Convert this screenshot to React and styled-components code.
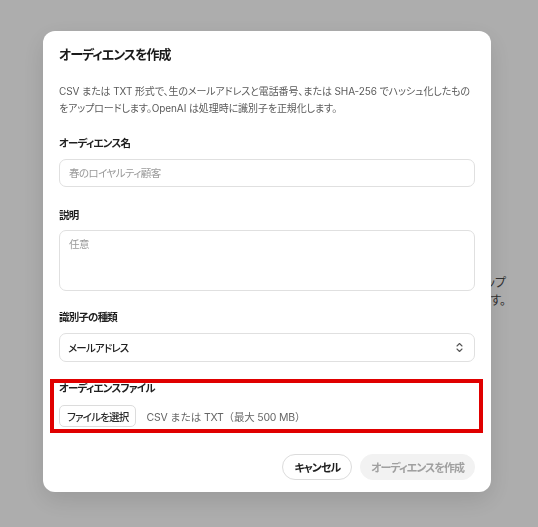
import React from "react";
import styled, { createGlobalStyle } from "styled-components";

const Global = createGlobalStyle`
  html, body { margin: 0; padding: 0; background: #fff; }
  body {
    font-family: Inter, "Noto Sans CJK JP", sans-serif;
    font-feature-settings: "palt";
    -webkit-font-smoothing: antialiased;
  }
  * { box-sizing: border-box; }
`;

const Page = styled.div`
  width: 538px;
  height: 527px;
  padding: 274px 32px 0 0;
  display: flex;
  justify-content: flex-end;
`;

const PageText = styled.p`
  margin: 0;
  width: 220px;
  text-align: right;
  font-size: 12px;
  line-height: 18px;
  color: #4a4a4a;
`;

const Overlay = styled.div`
  position: fixed;
  inset: 0;
  background: rgba(0, 0, 0, 0.32);
  display: flex;
  justify-content: center;
  align-items: flex-start;
  padding: 31px 4px 0 0;
`;

const Dialog = styled.div`
  width: 448px;
  height: 461px;
  background: #fff;
  border-radius: 12px;
  box-shadow: 0 8px 24px rgba(0, 0, 0, 0.12);
  padding: 13px 16px 12px;
  display: flex;
  flex-direction: column;
`;

const Title = styled.h2`
  margin: 0;
  font-size: 13px;
  line-height: 20px;
  letter-spacing: -1px;
  font-weight: 600;
  color: #1a1a1a;
`;

const Description = styled.p`
  margin: 19px 0 0;
  font-size: 10px;
  line-height: 16.5px;
  letter-spacing: -0.1px;
  color: #5a5a5a;
`;

const Field = styled.div`
  position: relative;
  display: flex;
  flex-direction: column;
  gap: ${(p) => p.$gap || 7}px;
  margin-top: ${(p) => p.$top || 20}px;
`;

const Label = styled.label`
  font-size: 10.5px;
  line-height: 16px;
  letter-spacing: -0.8px;
  font-weight: 600;
  color: #1f1f1f;
`;

const Input = styled.input`
  height: 28px;
  width: 100%;
  border: 1px solid #e0e0e0;
  border-radius: 7px;
  padding: 0 9px;
  font: inherit;
  font-size: 10.5px;
  letter-spacing: -0.6px;
  color: #222;
  outline: none;
  &::placeholder { color: #9a9a9a; }
`;

const TextArea = styled.textarea`
  height: 61px;
  width: 100%;
  border: 1px solid #e0e0e0;
  border-radius: 7px;
  padding: 6px 9px;
  font: inherit;
  font-size: 10.5px;
  letter-spacing: -0.6px;
  line-height: 16px;
  resize: none;
  outline: none;
  &::placeholder { color: #9a9a9a; }
`;

const Select = styled.div`
  height: 29px;
  border: 1px solid #e0e0e0;
  border-radius: 7px;
  padding: 0 10px 0 8px;
  display: flex;
  align-items: center;
  justify-content: space-between;
  font-size: 10.5px;
  letter-spacing: -0.8px;
  font-weight: 500;
  color: #1f1f1f;
`;

const FileRow = styled.div`
  display: flex;
  align-items: center;
  gap: 10px;
`;

const FileButton = styled.button`
  height: 22px;
  padding: 0 7px;
  border: 1px solid #dcdcdc;
  border-radius: 5px;
  background: #fff;
  font: inherit;
  font-size: 10.5px;
  letter-spacing: -0.8px;
  font-weight: 500;
  color: #2a2a2a;
`;

const FileHint = styled.span`
  font-size: 10.5px;
  letter-spacing: -0.2px;
  font-feature-settings: normal;
  color: #666;
`;

const Highlight = styled.div`
  position: absolute;
  top: -2px;
  right: -8px;
  bottom: -6px;
  left: -9px;
  border: 4px solid #e00000;
  pointer-events: none;
`;

const Footer = styled.div`
  margin-top: auto;
  display: flex;
  justify-content: flex-end;
  gap: 8px;
`;

const Button = styled.button`
  height: 26px;
  padding: 0 ${(p) => (p.$primary ? 10 : 11)}px;
  border-radius: 13px;
  border: 1px solid ${(p) => (p.$primary ? "#f2f2f2" : "#dcdcdc")};
  background: ${(p) => (p.$primary ? "#f2f2f2" : "#fff")};
  color: ${(p) => (p.$primary ? "#a0a0a0" : "#1f1f1f")};
  font: inherit;
  font-size: 11px;
  letter-spacing: -1px;
  font-weight: 600;
`;

const Chevrons = () => (
  <svg width="9" height="11" viewBox="0 0 9 11" fill="none" stroke="#555" strokeWidth="1.1" strokeLinecap="round" strokeLinejoin="round">
    <path d="M2 4 L4.5 1.5 L7 4" />
    <path d="M2 7 L4.5 9.5 L7 7" />
  </svg>
);

export default function App() {
  return (
    <>
      <Global />
      <Page>
        <PageText>
          オーディエンスファイルをアップ
          <br />
          ロードして作成しま す。
        </PageText>
      </Page>
      <Overlay>
        <Dialog>
          <Title>オーディエンスを作成</Title>
          <Description>
            CSV または TXT 形式で、生のメールアドレスと電話番号、または SHA-256 でハッシュ化したものをアップロードします。OpenAI は処理時に識別子を正規化します。
          </Description>
          <Field $top={20}>
            <Label>オーディエンス名</Label>
            <Input placeholder="春のロイヤルティ顧客" />
          </Field>
          <Field $top={21} $gap={6}>
            <Label>説明</Label>
            <TextArea placeholder="任意" />
          </Field>
          <Field $top={19}>
            <Label>識別子の種類</Label>
            <Select>
              <span>メールアドレス</span>
              <Chevrons />
            </Select>
          </Field>
          <Field $top={19} $gap={8}>
            <Label>オーディエンスファイル</Label>
            <FileRow>
              <FileButton>ファイルを選択</FileButton>
              <FileHint>CSV または TXT（最大 500 MB）</FileHint>
            </FileRow>
            <Highlight />
          </Field>
          <Footer>
            <Button>キャンセル</Button>
            <Button $primary>オーディエンスを作成</Button>
          </Footer>
        </Dialog>
      </Overlay>
    </>
  );
}
